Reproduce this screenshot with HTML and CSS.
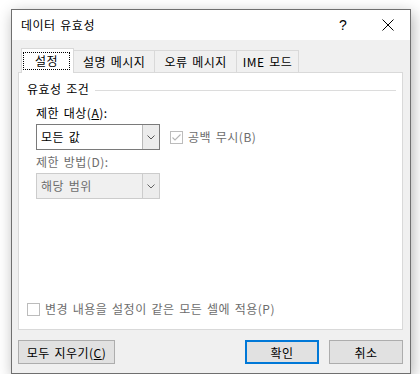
FILE: index.html
```html
<!DOCTYPE html>
<html>
  <head>
    <meta charset="utf-8" />
    <link rel="stylesheet" href="styles.css">
  </head>

  <body class="page">
    <div class="dialog">
      <div class="dialog-titlebar">
        <span class="dialog-title">데이터 유효성</span>
        <button class="titlebar-button titlebar-help">?</button>
        <button class="titlebar-button titlebar-close">
          <svg width="12" height="12" viewBox="0 0 12 12">
            <path d="M0.5 0.5L11.5 11.5M11.5 0.5L0.5 11.5" stroke="#000" stroke-width="1" fill="none" />
          </svg>
        </button>
      </div>

      <div class="dialog-body">
        <div class="tab-strip">
          <div class="tab tab-active"><span class="tab-focus">설정</span></div>
          <div class="tab">설명 메시지</div>
          <div class="tab">오류 메시지</div>
          <div class="tab tab-narrow">IME 모드</div>
        </div>

        <div class="tab-panel">
          <div class="group-heading">
            <span class="group-title">유효성 조건</span>
            <span class="group-line"></span>
          </div>

          <div class="field-label">제한 대상(<u>A</u>):</div>
          <div class="field-row">
            <div class="combo">
              <span class="combo-value">모든 값</span>
              <span class="combo-arrow">
                <svg width="8" height="5" viewBox="0 0 8 5">
                  <path d="M0.5 0.5L4 4L7.5 0.5" stroke="#444" stroke-width="0.9" fill="none" />
                </svg>
              </span>
            </div>
            <label class="check check-disabled">
              <span class="check-box">
                <svg width="11" height="11" viewBox="0 0 11 11">
                  <path d="M1.5 5.5L4 8L9.5 2.5" stroke="#b5b5b5" stroke-width="1.1" fill="none" />
                </svg>
              </span>
              공백 무시(B)
            </label>
          </div>

          <div class="field-label field-label-disabled">제한 방법(D):</div>
          <div class="combo combo-disabled">
            <span class="combo-value">해당 범위</span>
            <span class="combo-arrow">
              <svg width="8" height="5" viewBox="0 0 8 5">
                <path d="M0.5 0.5L4 4L7.5 0.5" stroke="#555" stroke-width="0.9" fill="none" />
              </svg>
            </span>
          </div>

          <label class="check check-disabled apply-all">
            <span class="check-box"></span>
            변경 내용을 설정이 같은 모든 셀에 적용(P)
          </label>
        </div>

        <div class="dialog-buttons">
          <button class="push-button push-button-wide">모두 지우기(<u>C</u>)</button>
          <span class="dialog-buttons-spacer"></span>
          <button class="push-button push-button-default">확인</button>
          <button class="push-button">취소</button>
        </div>
      </div>
    </div>
  </body>
</html>
```

FILE: styles.css
```css
:root {
  --font: "Noto Sans CJK KR", "Malgun Gothic", sans-serif;
  --border-light: #d9d9d9;
  --text-disabled: #6d6d6d;
}

.page {
  margin: 0;
  background: #ffffff;
  font-family: var(--font);
  font-size: 12px;
  letter-spacing: 0.5px;
  word-spacing: 1.5px;
  color: #000;
}

.dialog {
  margin: 9px 0 0 11px;
  width: 398px;
  height: 363px;
  border: 1px solid #6f6f6f;
  background: #f0f0f0;
  display: flex;
  flex-direction: column;
  box-shadow: 2px 4px 14px rgba(0, 0, 0, 0.3);
}

.dialog-titlebar {
  height: 30px;
  background: #fff;
  display: flex;
  align-items: center;
}

.dialog-title {
  flex: 1;
  padding-left: 9px;
  line-height: 16px;
}

.titlebar-button {
  height: 30px;
  border: 0;
  padding: 0;
  margin: 0;
  background: transparent;
  display: flex;
  align-items: center;
  justify-content: center;
  font-family: "Liberation Sans", sans-serif;
  font-size: 14px;
  color: #000;
}

.titlebar-help {
  width: 46px;
}

.titlebar-close {
  width: 44px;
}

.dialog-body {
  flex: 1;
  display: flex;
  flex-direction: column;
  padding: 8px 7px 9px 6px;
}

.tab-strip {
  display: flex;
  align-items: flex-end;
  height: 24px;
  padding-left: 3px;
}

.tab {
  height: 21px;
  line-height: 21px;
  padding: 0 9px;
  margin-left: -1px;
  border: 1px solid var(--border-light);
  border-bottom: 0;
  background: #f0f0f0;
  white-space: nowrap;
}

.tab-narrow {
  padding: 0 6px;
}

.tab-active {
  box-sizing: border-box;
  height: 25px;
  line-height: 16px;
  padding: 3px 3px 0 1px;
  margin: 0 0 -1px 0;
  background: #fff;
  position: relative;
  z-index: 1;
}

.tab-focus {
  display: inline-block;
  width: 45px;
  text-align: center;
  border: 1px dotted #000;
}

.tab-panel {
  flex: 1;
  display: flex;
  flex-direction: column;
  background: #fff;
  border: 1px solid var(--border-light);
  padding: 8px 6px 12px 8px;
}

.group-heading {
  display: flex;
  align-items: center;
  line-height: 16px;
}

.group-line {
  flex: 1;
  height: 1px;
  margin: 2px 0 0 6px;
  background: #dcdcdc;
}

.field-label {
  margin: 8px 0 0 9px;
  line-height: 16px;
}

.field-label-disabled {
  margin-top: 4px;
  color: var(--text-disabled);
}

.field-row {
  display: flex;
  align-items: center;
}

.combo {
  display: flex;
  width: 122px;
  height: 24px;
  margin: 3px 0 0 9px;
  border: 1px solid #7a7a7a;
  background: #fff;
}

.combo-value {
  flex: 1;
  padding-left: 4px;
  line-height: 24px;
}

.combo-arrow {
  width: 16px;
  display: flex;
  align-items: center;
  justify-content: center;
  border-left: 1px solid #b9b9b9;
  background: #ececec;
}

.combo-disabled {
  border-color: #cccccc;
  background: #f0f0f0;
  color: var(--text-disabled);
}

.combo-disabled .combo-arrow {
  border-left-color: #cccccc;
}

.check {
  display: flex;
  align-items: center;
  line-height: 16px;
}

.check-disabled {
  color: var(--text-disabled);
}

.check-box {
  width: 11px;
  height: 11px;
  border: 1px solid #bcbcbc;
  background: #fff;
  margin-right: 5px;
  display: flex;
}

.field-row .check {
  margin: 3px 0 0 10px;
}

.apply-all {
  margin-top: auto;
}

.dialog-buttons {
  display: flex;
  padding-top: 10px;
}

.dialog-buttons-spacer {
  flex: 1;
}

.push-button {
  width: 74px;
  height: 24px;
  margin: 0 0 0 10px;
  padding: 0;
  border: 1px solid #adadad;
  background: #e1e1e1;
  font-family: var(--font);
  font-size: 12px;
  letter-spacing: 0.5px;
  word-spacing: 1.5px;
  color: #000;
}

.push-button-wide {
  width: 97px;
  margin-left: 0;
}

.push-button-default {
  border: 2px solid #0078d7;
}
```
